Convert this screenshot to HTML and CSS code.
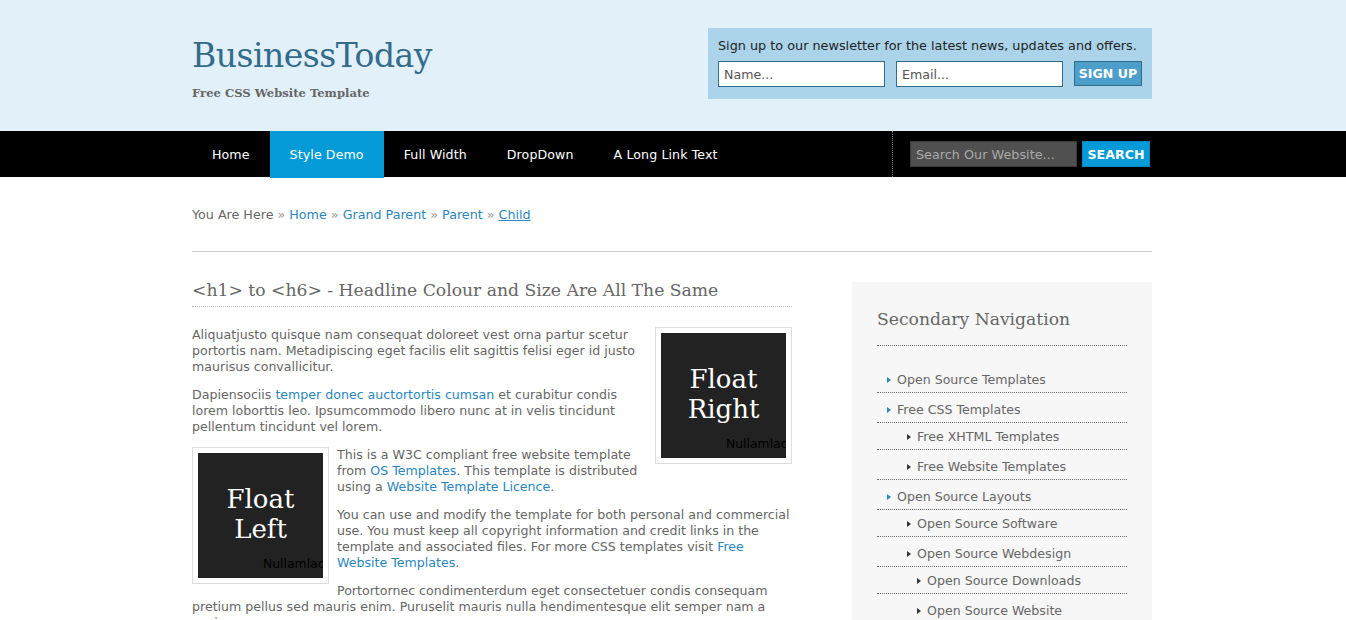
FILE: index.html
```html
<!DOCTYPE html>
<html lang="en">
<head>
<meta charset="utf-8">
<title>BusinessToday</title>
<link rel="stylesheet" href="styles.css">
</head>
<body>
<div class="top">
  <header class="container header">
    <div class="brand">
      <h1 class="logo">BusinessToday</h1>
      <p class="tagline">Free CSS Website Template</p>
    </div>
    <form class="newsletter">
      <p class="newsletter-text">Sign up to our newsletter for the latest news, updates and offers.</p>
      <div class="newsletter-row">
        <input class="nl-input" type="text" placeholder="Name...">
        <input class="nl-input" type="text" placeholder="Email...">
        <button class="nl-button" type="button">SIGN UP</button>
      </div>
    </form>
  </header>
</div>
<div class="navwrap">
  <nav class="container navbar">
    <ul class="topnav">
      <li><a href="#">Home</a></li>
      <li class="active"><a href="#">Style Demo</a></li>
      <li><a href="#">Full Width</a></li>
      <li><a href="#">DropDown</a></li>
      <li><a href="#">A Long Link Text</a></li>
    </ul>
    <form class="search">
      <input class="search-input" type="text" placeholder="Search Our Website...">
      <button class="search-button" type="button">SEARCH</button>
    </form>
  </nav>
</div>
<div class="container main">
  <div class="breadcrumb">You Are Here <span class="sep">»</span> <a href="#">Home</a> <span class="sep">»</span> <a href="#">Grand Parent</a> <span class="sep">»</span> <a href="#">Parent</a> <span class="sep">»</span> <a class="current" href="#">Child</a></div>
  <div class="rule"></div>
  <div class="columns">
    <section class="content">
      <h2 class="content-title">&lt;h1&gt; to &lt;h6&gt; - Headline Colour and Size Are All The Same</h2>
      <div class="frame frame-right"><div class="pic"><span class="pic-label">Float<br>Right</span><span class="pic-caption">Nullamlacus</span></div></div>
      <p>Aliquatjusto quisque nam consequat doloreet vest orna partur scetur portortis nam. Metadipiscing eget facilis elit sagittis felisi eger id justo maurisus convallicitur.</p>
      <p>Dapiensociis <a href="#">temper donec auctortortis cumsan</a> et curabitur condis lorem loborttis leo. Ipsumcommodo libero nunc at in velis tincidunt pellentum tincidunt vel lorem.</p>
      <div class="frame frame-left"><div class="pic"><span class="pic-label">Float<br>Left</span><span class="pic-caption">Nullamlacus</span></div></div>
      <p>This is a W3C compliant free website template from <a href="#">OS Templates</a>. This template is distributed using a <a href="#">Website Template Licence</a>.</p>
      <p>You can use and modify the template for both personal and commercial use. You must keep all copyright information and credit links in the template and associated files. For more CSS templates visit <a href="#">Free Website Templates</a>.</p>
      <p>Portortornec condimenterdum eget consectetuer condis consequam pretium pellus sed mauris enim. Puruselit mauris nulla hendimentesque elit semper nam a sapien urna sempus.</p>
    </section>
    <aside class="sidebar">
      <h2 class="side-title">Secondary Navigation</h2>
      <ul class="subnav">
        <li><a href="#">Open Source Templates</a></li>
        <li><a href="#">Free CSS Templates</a>
          <ul>
            <li><a href="#">Free XHTML Templates</a></li>
            <li><a href="#">Free Website Templates</a></li>
          </ul>
        </li>
        <li><a href="#">Open Source Layouts</a>
          <ul>
            <li><a href="#">Open Source Software</a></li>
            <li><a href="#">Open Source Webdesign</a>
              <ul>
                <li><a href="#">Open Source Downloads</a></li>
                <li><a href="#">Open Source Website</a></li>
              </ul>
            </li>
          </ul>
        </li>
      </ul>
    </aside>
  </div>
</div>
</body>
</html>
```
FILE: styles.css
```css
* { box-sizing: border-box; }
html, body { margin: 0; padding: 0; }
body {
  background: #fff;
  font-family: "DejaVu Sans", Verdana, sans-serif;
  font-size: 12.6px;
  line-height: 16px;
  color: #666;
}
a { color: #2a86bf; text-decoration: none; }

.container {
  width: 962px;
  margin: 0 auto;
  padding-right: 2px;
}

/* Header */
.top { background: #e1f0f9; }
.header {
  display: flex;
  justify-content: space-between;
  align-items: flex-start;
  height: 131px;
  padding-top: 28px;
}
.brand { margin-top: 11px; }
.logo {
  margin: 0;
  font-family: "DejaVu Serif", Georgia, serif;
  font-weight: normal;
  font-size: 33px;
  line-height: 34px;
  color: #336b8b;
  letter-spacing: -0.5px;
}
.tagline {
  margin: 12px 0 0;
  font-family: "DejaVu Serif", Georgia, serif;
  font-weight: bold;
  font-size: 11.6px;
  line-height: 16px;
  color: #666;
}
.newsletter {
  width: 444px;
  background: #abd4ea;
  padding: 10px 10px 12px;
}
.newsletter-text {
  margin: 0 0 7px;
  font-size: 12.8px;
  line-height: 16px;
  color: #222;
  white-space: nowrap;
}
.newsletter-row { display: flex; align-items: flex-start; }
.nl-input {
  width: 167px;
  height: 26px;
  margin: 0 11px 0 0;
  padding: 0 5px;
  border: 1px solid #336b8b;
  background: #fff;
  font-family: "DejaVu Sans", Verdana, sans-serif;
  font-size: 12.6px;
  color: #555;
}
.nl-input::placeholder { color: #555; }
.nl-button {
  width: 68px;
  height: 25px;
  margin: 0;
  padding: 0;
  border: 1px solid #336b8b;
  background: #4d9fcb;
  color: #fff;
  font-family: "DejaVu Sans", Verdana, sans-serif;
  font-weight: bold;
  font-size: 12.6px;
}

/* Navigation */
.navwrap { background: #000; }
.navbar { display: flex; height: 46px; }
.topnav {
  display: flex;
  flex: 1;
  margin: 0;
  padding: 0;
  list-style: none;
}
.topnav a {
  display: block;
  padding: 0 20px;
  font-size: 12.6px;
  letter-spacing: 0.1px;
  line-height: 47px;
  color: #fff;
}
.topnav .active a { background: #059bd8; }
.search {
  width: 260px;
  display: flex;
  gap: 5px;
  align-items: flex-start;
  padding: 10px 2px 0 17px;
  border-left: 1px dotted #777;
}
.search-input {
  width: 167px;
  height: 26px;
  margin: 0;
  padding: 0 5px;
  border: 1px solid #3a3a3a;
  background: #505050;
  font-family: "DejaVu Sans", Verdana, sans-serif;
  font-size: 12.8px;
  color: #aaa;
}
.search-input::placeholder { color: #aaa; }
.search-button {
  width: 68px;
  height: 26px;
  margin: 0;
  padding: 0;
  border: 1px solid #0a86bd;
  background: #059bd8;
  color: #fff;
  font-family: "DejaVu Sans", Verdana, sans-serif;
  font-weight: bold;
  font-size: 12.6px;
}

/* Main */
.main { padding-top: 30px; }
.breadcrumb { font-size: 12.7px; line-height: 16px; color: #666; }
.breadcrumb .sep { color: #999; }
.breadcrumb .current { text-decoration: underline; }
.rule { margin: 28px 0 30px; border-top: 1px solid #ccc; }

.columns {
  display: flex;
  justify-content: space-between;
  align-items: flex-start;
}
.content { width: 600px; }
.content-title {
  margin: 0 0 20px;
  padding-bottom: 8px;
  border-bottom: 1px dotted #bbb;
  font-family: "DejaVu Serif", Georgia, serif;
  font-weight: normal;
  font-size: 17.2px;
  line-height: 16px;
  color: #666;
}
.content p { margin: 0 0 12px; }

.frame {
  border: 1px solid #ddd;
  padding: 5px;
  background: #fff;
}
.frame-right { float: right; margin: 0 0 10px 12px; }
.frame-left { float: left; margin: 0 8px 8px 0; }
.pic {
  position: relative;
  width: 125px;
  height: 125px;
  background: #222;
  overflow: hidden;
  display: flex;
  align-items: center;
  justify-content: center;
}
.pic-label {
  font-family: "DejaVu Serif", Georgia, serif;
  font-size: 26px;
  line-height: 30px;
  color: #fff;
  text-align: center;
  margin-top: -4px;
}
.pic-caption {
  position: absolute;
  left: 65px;
  bottom: 6px;
  white-space: nowrap;
  color: #000;
  font-size: 12.4px;
  line-height: 16px;
}

/* Sidebar */
.sidebar {
  width: 300px;
  min-height: 400px;
  background: #f7f7f7;
  padding: 25px;
}
.side-title {
  margin: 0 0 20px;
  padding-bottom: 14px;
  border-bottom: 1px dotted #666;
  font-family: "DejaVu Serif", Georgia, serif;
  font-weight: normal;
  font-size: 17.2px;
  line-height: 24px;
  color: #666;
}
.subnav, .subnav ul { margin: 0; padding: 0; list-style: none; }
.subnav li + li { margin-top: 3px; }
.subnav a {
  position: relative;
  display: block;
  padding: 6px 0 4px 20px;
  font-size: 12.6px;
  line-height: 16px;
  color: #666;
  border-bottom: 1px dotted #666;
}
.subnav a::before {
  content: "";
  position: absolute;
  left: 10px;
  top: 11px;
  border-left: 4px solid #2a86bf;
  border-top: 3px solid transparent;
  border-bottom: 3px solid transparent;
}
.subnav ul a { padding-left: 40px; }
.subnav ul a::before { left: 30px; border-left-color: #333; }
.subnav ul ul a { padding-left: 50px; }
.subnav ul ul a::before { left: 40px; }
```
